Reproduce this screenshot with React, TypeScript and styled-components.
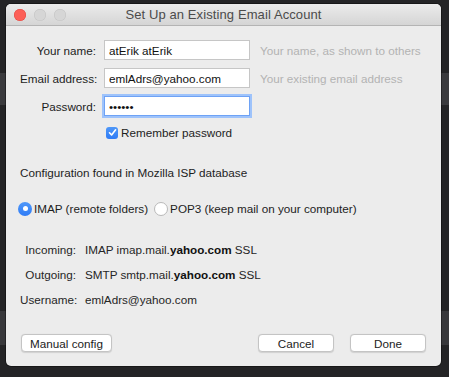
import styled, { createGlobalStyle } from 'styled-components';

const GlobalStyle = createGlobalStyle`
  html, body {
    margin: 0;
    padding: 0;
    background: #242426;
  }
  body {
    font-family: 'Liberation Sans', Arial, sans-serif;
    font-size: 11.7px;
    line-height: 15px;
    color: #1d1d1d;
  }
`;

const Desktop = styled.div`
  width: 449px;
  height: 377px;
  overflow: hidden;
  padding: 4px 8px 0 6px;
  box-sizing: border-box;
  background: linear-gradient(
    to bottom,
    #242426 0,
    #242426 73px,
    #3a3a3d 73px,
    #3a3a3d 105px,
    #242426 105px,
    #242426 311px,
    #38383b 311px,
    #38383b 345px,
    #242426 345px
  );
`;

const Window = styled.div`
  width: 435px;
  height: 362px;
  border-radius: 5px;
  background: #ececec;
  overflow: hidden;
  display: flex;
  flex-direction: column;
  box-shadow: 0 0 0 1px rgba(0, 0, 0, 0.35);
`;

const TitleBar = styled.div`
  height: 21px;
  flex: none;
  position: relative;
  display: flex;
  align-items: center;
  justify-content: center;
  background: linear-gradient(#ebebeb, #d5d5d5);
  border-bottom: 1px solid #b4b4b4;
`;

const Lights = styled.div`
  position: absolute;
  left: 8px;
  top: 5px;
  display: flex;
  gap: 8px;
`;

const Light = styled.span<{ $color: string; $edge: string }>`
  width: 12px;
  height: 12px;
  border-radius: 50%;
  background: ${p => p.$color};
  box-shadow: inset 0 0 0 0.5px ${p => p.$edge};
`;

const Title = styled.div`
  font-size: 13px;
  color: #4b4b4b;
  letter-spacing: 0.1px;
`;

const Body = styled.div`
  flex: 1;
  display: flex;
  flex-direction: column;
  padding: 14px 15px 14px 14px;
`;

const FormGrid = styled.div`
  display: grid;
  grid-template-columns: 76px 146px auto;
  column-gap: 8px;
  row-gap: 8px;
  align-items: center;
`;

const Label = styled.label`
  text-align: right;
  white-space: nowrap;
`;

const Input = styled.input<{ $focused?: boolean }>`
  box-sizing: border-box;
  height: 20px;
  width: 146px;
  margin: 0;
  padding: 0 4px;
  font-family: inherit;
  font-size: 11.7px;
  color: #111;
  background: #fff;
  border: 1px solid ${p => (p.$focused ? '#6ea2f5' : '#c6c6c6')};
  box-shadow: ${p => (p.$focused ? '0 0 0 2px #9ec3fb' : 'none')};
  outline: none;
`;

const Hint = styled.span`
  color: #b3b3b3;
  margin-left: 2px;
  white-space: nowrap;
`;

const CheckRow = styled.label`
  grid-column: 2 / 4;
  display: flex;
  align-items: center;
  gap: 3px;
  margin-left: 2px;
  margin-top: 1px;
`;

const CheckBox = styled.span`
  width: 12px;
  height: 12px;
  border-radius: 3px;
  background: linear-gradient(#4e97f8, #2f7cf6);
  display: flex;
  align-items: center;
  justify-content: center;
`;

const Status = styled.div`
  margin: 25px 0 0 0;
`;

const RadioGroup = styled.div`
  display: flex;
  align-items: center;
  margin: 21px 0 0 -2px;
  gap: 6px;
`;

const RadioOption = styled.label`
  display: flex;
  align-items: center;
  gap: 2px;
`;

const Radio = styled.span<{ $on?: boolean }>`
  width: 14px;
  height: 14px;
  box-sizing: border-box;
  border-radius: 50%;
  display: flex;
  align-items: center;
  justify-content: center;
  background: ${p => (p.$on ? 'linear-gradient(#4f98f9, #2f7cf6)' : '#fff')};
  border: ${p => (p.$on ? 'none' : '1px solid #b9b9b9')};
  &::after {
    content: '';
    display: ${p => (p.$on ? 'block' : 'none')};
    width: 5px;
    height: 5px;
    border-radius: 50%;
    background: #fff;
  }
`;

const Details = styled.div`
  display: grid;
  grid-template-columns: 56px auto;
  column-gap: 9px;
  row-gap: 10px;
  margin-top: 26px;
`;

const DetailLabel = styled.span`
  text-align: right;
  white-space: nowrap;
  color: #262626;
`;

const DetailValue = styled.span`
  color: #262626;
  b {
    font-weight: bold;
    color: #111;
  }
`;

const Footer = styled.div`
  margin-top: auto;
  display: flex;
  align-items: center;
  gap: 16px;
  padding-left: 1px;
`;

const Button = styled.button<{ $w: number }>`
  box-sizing: border-box;
  width: ${p => p.$w}px;
  height: 18px;
  padding: 0;
  font-family: inherit;
  font-size: 11.7px;
  color: #1b1b1b;
  background: #fff;
  border: 1px solid #c4c4c4;
  border-radius: 4px;
  box-shadow: 0 0.5px 1px rgba(0, 0, 0, 0.12);
`;

const Spacer = styled.div`
  flex: 1;
`;

function App() {
  return (
    <>
      <GlobalStyle />
      <Desktop>
        <Window>
          <TitleBar>
            <Lights>
              <Light $color="#fc5f57" $edge="#e14640" />
              <Light $color="#d6d6d6" $edge="#c2c2c2" />
              <Light $color="#d6d6d6" $edge="#c2c2c2" />
            </Lights>
            <Title>Set Up an Existing Email Account</Title>
          </TitleBar>
          <Body>
            <FormGrid>
              <Label>Your name:</Label>
              <Input defaultValue="atErik atErik" />
              <Hint>Your name, as shown to others</Hint>
              <Label>Email address:</Label>
              <Input defaultValue="emlAdrs@yahoo.com" />
              <Hint>Your existing email address</Hint>
              <Label>Password:</Label>
              <Input type="password" defaultValue="secret" $focused />
              <span />
              <span />
              <CheckRow>
                <CheckBox>
                  <svg width="9" height="9" viewBox="0 0 9 9">
                    <path d="M1.5 4.8 L3.6 7 L7.6 1.8" fill="none" stroke="#fff" strokeWidth="1.6" strokeLinecap="round" strokeLinejoin="round" />
                  </svg>
                </CheckBox>
                Remember password
              </CheckRow>
            </FormGrid>
            <Status>Configuration found in Mozilla ISP database</Status>
            <RadioGroup>
              <RadioOption>
                <Radio $on />
                IMAP (remote folders)
              </RadioOption>
              <RadioOption>
                <Radio />
                POP3 (keep mail on your computer)
              </RadioOption>
            </RadioGroup>
            <Details>
              <DetailLabel>Incoming:</DetailLabel>
              <DetailValue>IMAP imap.mail.<b>yahoo.com</b> SSL</DetailValue>
              <DetailLabel>Outgoing:</DetailLabel>
              <DetailValue>SMTP smtp.mail.<b>yahoo.com</b> SSL</DetailValue>
              <DetailLabel>Username:</DetailLabel>
              <DetailValue>emlAdrs@yahoo.com</DetailValue>
            </Details>
            <Footer>
              <Button $w={91}>Manual config</Button>
              <Spacer />
              <Button $w={76}>Cancel</Button>
              <Button $w={76}>Done</Button>
            </Footer>
          </Body>
        </Window>
      </Desktop>
    </>
  );
}

export default App;
